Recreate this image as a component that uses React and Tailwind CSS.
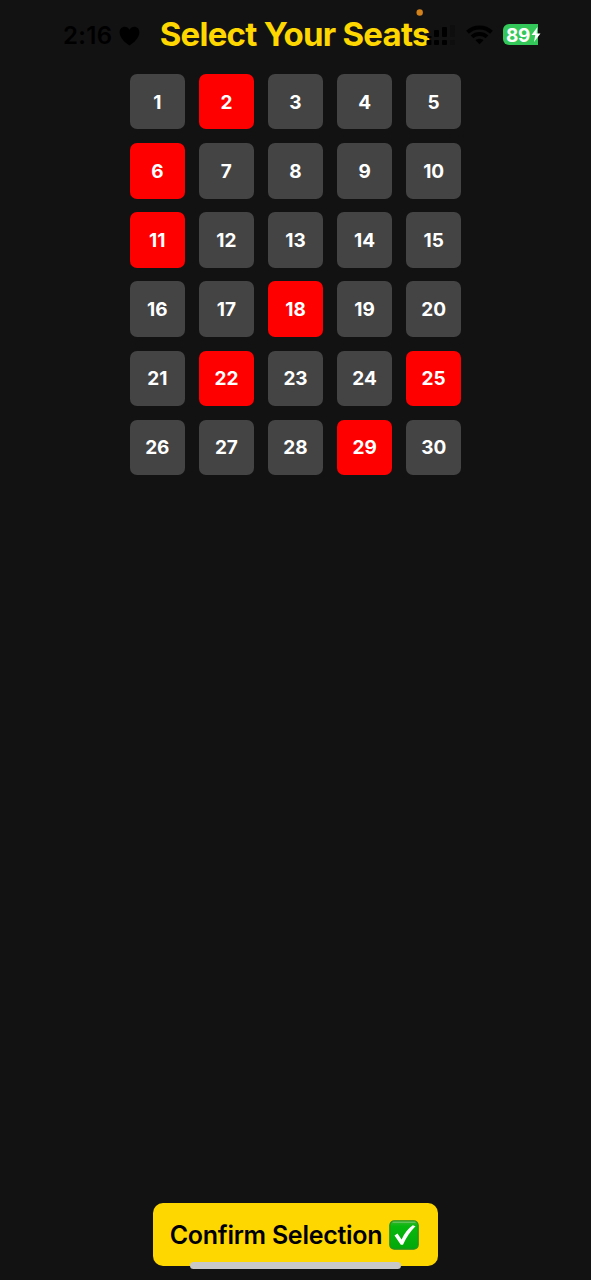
const taken = new Set([2, 6, 11, 18, 22, 25, 29]);
const seats = Array.from({ length: 30 }, (_, i) => i + 1);

function StatusBar() {
  return (
    <div className="absolute inset-x-0 top-0 h-14">
      <span className="absolute left-[63px] top-[22px] text-[24px] leading-[28px] font-semibold tracking-[0.3px] text-black">2:16</span>
      <svg className="absolute left-[119px] top-[26px]" width="21" height="20" viewBox="0 0 21 20">
        <path d="M10.500 19.500C7 17.200.600 12.200.600 6.500C.600 3 2.800.800 5.600.800C7.700.800 9.500 2 10.500 3.800C11.500 2 13.300.800 15.400.800C18.200.800 20.400 3 20.400 6.500C20.400 12.200 14 17.200 10.500 19.500Z" fill="#000" />
      </svg>
      <svg className="absolute left-[416px] top-[8px]" width="8" height="8" viewBox="0 0 8 8">
        <circle cx="3.700" cy="4.500" r="3.200" fill="#d2811b" />
      </svg>
      <svg className="absolute left-[425px] top-[24px]" width="32" height="22" viewBox="0 0 32 22">
        <g fill="#000">
          <rect x="1.500" y="16" width="5" height="5" rx="1" />
          <rect x="9" y="16" width="5" height="5" rx="1" />
          <rect x="17" y="16" width="5" height="5" rx="1" />
          <rect x="2.500" y="12" width="4" height="2" />
          <rect x="9" y="6" width="5" height="7" rx="1" />
          <rect x="17" y="3" width="5" height="10" rx="1" />
        </g>
        <path d="M25 1h5v12h-5zM25 16h5v5h-5z" fill="#0e0e0e" />
      </svg>
      <svg className="absolute left-[466px] top-[25px]" width="27" height="20" viewBox="0 0 27 20" fill="none" stroke="#000" strokeWidth="4">
        <path d="M1.500 7.200C8.200.800 18.800.800 25.500 7.200" />
        <path d="M6 11.900C10.200 8 16.800 8 21 11.900" />
        <path d="M9.500 15.200C11.800 13.200 15.200 13.200 17.500 15.200L13.500 19.200Z" fill="#000" stroke="none" />
      </svg>
      <div className="absolute left-[503px] top-[24px] h-[21px] w-[35px] rounded-l-[6px] bg-[#34c759]" />
      <span className="absolute left-[506px] top-[24.500px] text-[19px] leading-[21px] font-bold tracking-[-0.3px] text-white">89</span>
      <svg className="absolute left-[530.500px] top-[27px]" width="10" height="15" viewBox="0 0 10 15">
        <path d="M6.500 0L.500 8H4.300L3 15L9.500 6.400H5.600Z" fill="#fff" />
      </svg>
    </div>
  );
}

function CheckMark() {
  return (
    <svg width="30" height="30" viewBox="0 0 30 30">
      <defs>
        <linearGradient id="green" x1="0" y1="0" x2="0" y2="1">
          <stop offset="0" stopColor="#38b52c" />
          <stop offset=".2" stopColor="#08b80d" />
          <stop offset="1" stopColor="#02a80a" />
        </linearGradient>
      </defs>
      <rect x=".8" y=".8" width="28.400" height="28.400" rx="4.500" fill="url(#green)" stroke="#278f22" strokeWidth="1.200" />
      <path d="M3.500 2.200H26.500" stroke="#79c96e" strokeWidth="1" />
      <path d="M5.500 15.600L8.500 13.500L12.600 19.500C15.500 13.200 19 8.300 23.800 5.200L26.500 6.200C21.300 11.200 17.500 17 14 24.800H11.800Z" fill="#fff" />
    </svg>
  );
}

export default function App() {
  return (
    <main className="relative flex h-[1280px] w-[591px] flex-col items-center overflow-hidden bg-[#121212] font-['Inter',sans-serif]">
      <h1 className="mt-[14px] mr-[1.5px] h-[40px] whitespace-nowrap text-[33px] leading-[40px] font-bold tracking-[-0.75px] text-[#ffd700]">
        Select Your Seats
      </h1>
      <div className="mt-[20.2px] grid grid-cols-[repeat(5,55.3px)] gap-[13.8px]">
        {seats.map((n) => (
          <button
            key={n}
            className={`flex h-[55.3px] items-center justify-center rounded-[7px] pt-[2.2px] text-[19px] font-bold text-white ${taken.has(n) ? "bg-[#ff0000]" : "bg-[#444444]"}`}
          >
            {n}
          </button>
        ))}
      </div>
      <button className="mt-auto mb-[14px] flex h-[63px] w-[285px] items-center justify-center gap-[7px] whitespace-nowrap rounded-[10px] bg-[#ffd700] pr-[2px] text-[25px] font-semibold tracking-[-0.27px] text-black">
        <span className="pt-[2px]">Confirm Selection</span>
        <CheckMark />
      </button>
      <StatusBar />
      <div className="absolute bottom-[11px] left-[190px] h-[7px] w-[211px] rounded-full bg-[#c8c8c8]" />
    </main>
  );
}
